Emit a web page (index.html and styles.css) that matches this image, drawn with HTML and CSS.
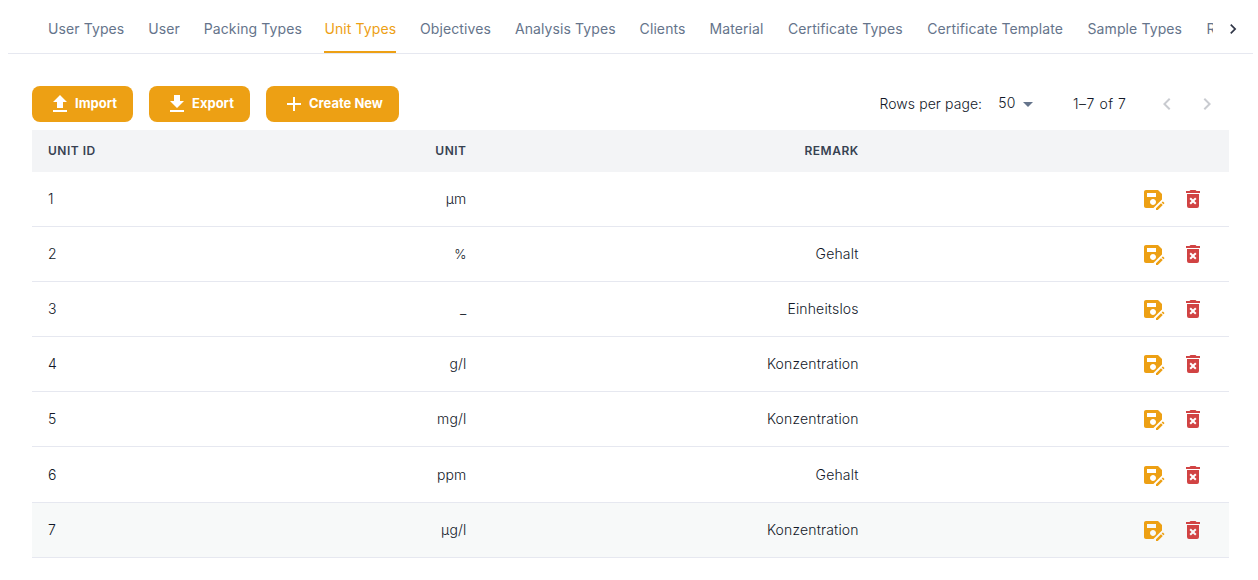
FILE: index.html
```html
<!DOCTYPE html>
<html lang="en">
<head>
<meta charset="utf-8">
<title>Unit Types</title>
<link rel="stylesheet" href="styles.css">
</head>
<body>
<svg class="sprite" width="0" height="0">
  <symbol id="save-edit" viewBox="0 0 24 24"><path d="M21 12.4V7l-4-4H5c-1.11 0-2 .9-2 2v14c0 1.1.89 2 2 2h7.4l8.6-8.6zM15 15c0 1.66-1.34 3-3 3s-3-1.34-3-3 1.34-3 3-3 3 1.34 3 3zM6 6h9v4H6V6zm13.99 10.25 1.77 1.77L16.77 23H15v-1.77l4.99-4.98zm3.26.26-.85.85-1.77-1.77.85-.85c.2-.2.51-.2.71 0l1.06 1.06c.2.2.2.51 0 .71z"/></symbol>
  <symbol id="delete" viewBox="0 0 24 24"><path d="M6 19a2 2 0 0 0 2 2h8a2 2 0 0 0 2-2V7H6v12zM8.46 11.88l1.41-1.41L12 12.59l2.12-2.12 1.41 1.41L13.41 14l2.12 2.12-1.41 1.41L12 15.41l-2.12 2.12-1.41-1.41L10.59 14l-2.13-2.12zM15.5 4l-1-1h-5l-1 1H5v2h14V4z"/></symbol>
</svg>
<nav class="tabs">
  <div class="tab-list">
    <a class="tab">User Types</a><a class="tab">User</a><a class="tab">Packing Types</a><a class="tab active">Unit Types</a><a class="tab">Objectives</a><a class="tab">Analysis Types</a><a class="tab">Clients</a><a class="tab">Material</a><a class="tab">Certificate Types</a><a class="tab">Certificate Template</a><a class="tab">Sample Types</a><a class="tab">R</a>
  </div>
  <button class="tab-scroll" aria-label="Next tabs"><svg width="20" height="20" viewBox="0 0 24 24"><path d="M10 6 8.59 7.41 13.17 12l-4.58 4.59L10 18l6-6z"/></svg></button>
</nav>
<main>
  <div class="toolbar">
    <button class="btn"><svg width="24" height="24" viewBox="0 0 24 24"><path d="M9 16h6v-6h4l-7-7-7 7h4zm-4 2h14v2H5z"/></svg><span>Import</span></button>
    <button class="btn"><svg width="24" height="24" viewBox="0 0 24 24"><path d="M19 9h-4V3H9v6H5l7 7zM5 18v2h14v-2z"/></svg><span>Export</span></button>
    <button class="btn"><svg width="24" height="24" viewBox="0 0 24 24"><path d="M19 13h-6v6h-2v-6H5v-2h6V5h2v6h6z"/></svg><span>Create New</span></button>
    <div class="pagination">
      <span class="rows-label">Rows per page:</span>
      <span class="rows-value"><span>50</span><svg width="24" height="24" viewBox="0 0 24 24"><path d="m7 10 5 5 5-5z"/></svg></span>
      <span class="range">1–7 of 7</span>
      <span class="pager"><svg width="24" height="24" viewBox="0 0 24 24"><path d="M15.41 7.41 14 6l-6 6 6 6 1.41-1.41L10.83 12z"/></svg><svg width="24" height="24" viewBox="0 0 24 24"><path d="M10 6 8.59 7.41 13.17 12l-4.58 4.59L10 18l6-6z"/></svg></span>
    </div>
  </div>
  <div class="table" role="table">
    <div class="row head" role="row"><span>Unit ID</span><span>Unit</span><span>Remark</span><span></span></div>
    <div class="row" role="row"><span>1</span><span>µm</span><span></span><span class="actions"><svg class="save"><use href="#save-edit"/></svg><svg class="delete"><use href="#delete"/></svg></span></div>
    <div class="row" role="row"><span>2</span><span class="percent">%</span><span>Gehalt</span><span class="actions"><svg class="save"><use href="#save-edit"/></svg><svg class="delete"><use href="#delete"/></svg></span></div>
    <div class="row" role="row"><span>3</span><span>_</span><span>Einheitslos</span><span class="actions"><svg class="save"><use href="#save-edit"/></svg><svg class="delete"><use href="#delete"/></svg></span></div>
    <div class="row" role="row"><span>4</span><span>g/l</span><span>Konzentration</span><span class="actions"><svg class="save"><use href="#save-edit"/></svg><svg class="delete"><use href="#delete"/></svg></span></div>
    <div class="row" role="row"><span>5</span><span>mg/l</span><span>Konzentration</span><span class="actions"><svg class="save"><use href="#save-edit"/></svg><svg class="delete"><use href="#delete"/></svg></span></div>
    <div class="row" role="row"><span>6</span><span>ppm</span><span>Gehalt</span><span class="actions"><svg class="save"><use href="#save-edit"/></svg><svg class="delete"><use href="#delete"/></svg></span></div>
    <div class="row hovered" role="row"><span>7</span><span>µg/l</span><span>Konzentration</span><span class="actions"><svg class="save"><use href="#save-edit"/></svg><svg class="delete"><use href="#delete"/></svg></span></div>
  </div>
</main>
</body>
</html>
```
FILE: styles.css
```css
* { box-sizing: border-box; }
body {
  margin: 0;
  overflow: hidden;
  background: #fff;
  color: #121828;
  font: 300 14px/22px Inter, "Liberation Sans", sans-serif;
}
svg { display: block; flex: none; fill: currentColor; }
button { border: 0; background: none; font: inherit; }
.sprite { position: absolute; }

.tabs {
  display: flex;
  height: 54px;
  margin: 0 5px 0 8px;
  border-bottom: 1px solid #e6e8f0;
}
.tab-list {
  display: flex;
  flex: 1;
  gap: 23.9px;
  min-width: 0;
  height: 54px;
  padding-left: 40px;
  overflow: hidden;
}
.tab {
  flex: none;
  height: 53px;
  padding-top: 18px;
  color: #65748b;
  font-weight: 400;
  letter-spacing: .1px;
  white-space: nowrap;
}
.tab.active {
  border-bottom: 2px solid #eda014;
  color: #eda014;
}
.tab:nth-child(3) { margin-right: -1.4px; }
.tab:nth-child(n+8) { margin-right: .6px; }
.tab-scroll { width: 40px; padding: 0 0 0 10px; color: #303647; }
.tab-scroll svg { margin-top: 5px; }

main { padding: 32px 29px 0 32px; }
.toolbar { display: flex; gap: 16px; height: 44px; }
.btn {
  display: flex;
  align-items: center;
  gap: 3px;
  height: 36px;
  padding: 0 16px;
  border-radius: 8px;
  background: #eda014;
  color: #fff;
  font-size: 13px;
  font-weight: 700;
}
.btn span { padding-bottom: 2px; }
.pagination {
  display: flex;
  align-items: center;
  height: 36px;
  margin-left: auto;
  letter-spacing: .08px;
}
.rows-value { display: flex; align-items: center; margin: 0 33px 0 16px; }
.rows-value > span { padding-bottom: 1.5px; letter-spacing: .4px; }
.rows-value svg { color: #65748b; }
.range { letter-spacing: .55px; }
.pager { display: flex; gap: 16px; margin: 0 10px 0 28.5px; color: #c9cbd0; }

.row {
  display: grid;
  grid-template-columns: 180px 270.5px 392.2px 1fr;
  align-items: center;
  height: 55.11px;
  padding-top: .1px;
  border-bottom: 1px solid #e6e8f0;
  letter-spacing: .16px;
}
.row > span { padding: 0 16px; text-align: right; }
.row > span:first-child { text-align: left; }
.row > .percent { font-size: 13px; }
.head {
  height: 41.9px;
  padding-top: 0;
  border: 0;
  background: #f3f4f6;
  color: #374151;
  font-size: 12px;
  font-weight: 600;
  letter-spacing: .5px;
  text-transform: uppercase;
}
.hovered { background: #f7f9f9; }
.row > .actions { display: flex; justify-content: flex-end; gap: 16px; padding-right: 24px; }
.actions svg { width: 24px; height: 24px; }
.save { color: #eda014; }
.delete { color: #d14343; }
```
